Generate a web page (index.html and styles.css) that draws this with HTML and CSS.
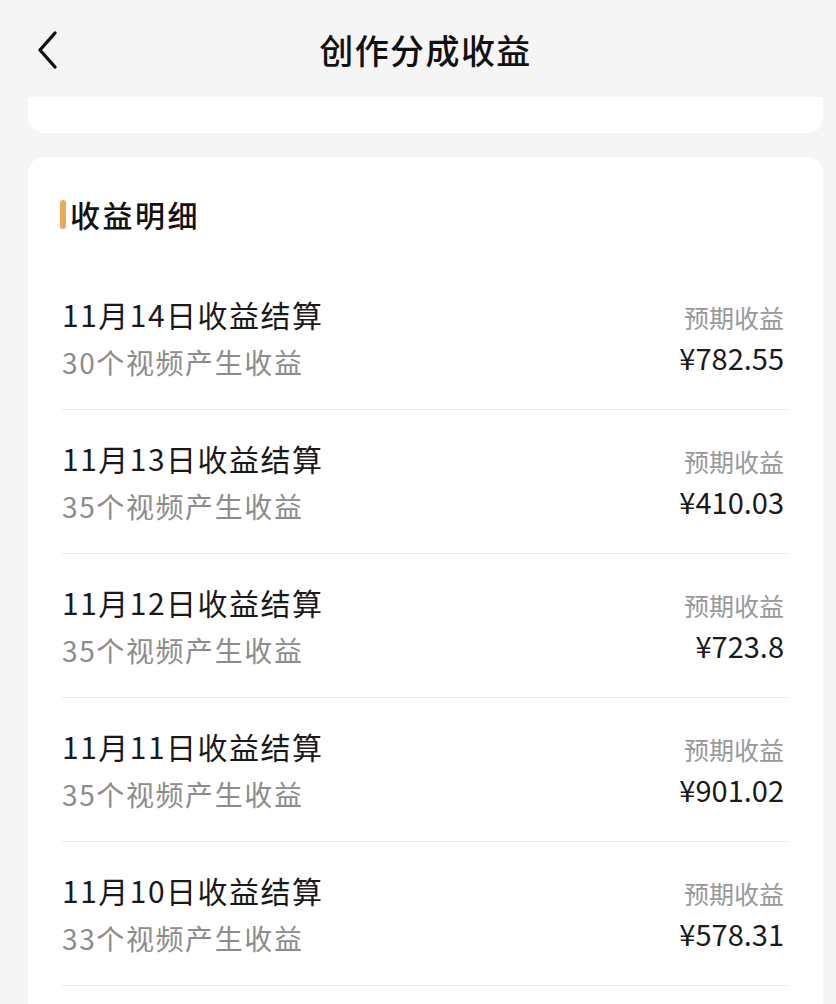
FILE: index.html
```html
<!DOCTYPE html>
<html lang="zh-CN">
<head>
<meta charset="utf-8">
<meta name="viewport" content="width=device-width, initial-scale=1.0">
<title>创作分成收益</title>
<link rel="stylesheet" href="styles.css">
</head>
<body>

<div class="page">
  <!-- Header -->
  <div class="header">
    <button class="back-btn" aria-label="返回">
      <svg width="22" height="40" viewBox="0 0 22 40"><path d="M19 3 L4 20 L19 37" fill="none" stroke="#111" stroke-width="3.4" stroke-linecap="round" stroke-linejoin="round"/></svg>
    </button>
    <div class="header-title">创作分成收益</div>
  </div>

  <!-- Summary card (scrolled) -->
  <div class="summary-card"></div>

  <!-- Detail list -->
  <div class="detail-card">
    <div class="section-title">收益明细</div>

    <div class="row">
      <div class="row-left">
        <div class="row-title">11月14日收益结算</div>
        <div class="row-sub">30个视频产生收益</div>
      </div>
      <div class="row-right">
        <div class="row-label">预期收益</div>
        <div class="row-amount">¥782.55</div>
      </div>
    </div>

    <div class="row">
      <div class="row-left">
        <div class="row-title">11月13日收益结算</div>
        <div class="row-sub">35个视频产生收益</div>
      </div>
      <div class="row-right">
        <div class="row-label">预期收益</div>
        <div class="row-amount">¥410.03</div>
      </div>
    </div>

    <div class="row">
      <div class="row-left">
        <div class="row-title">11月12日收益结算</div>
        <div class="row-sub">35个视频产生收益</div>
      </div>
      <div class="row-right">
        <div class="row-label">预期收益</div>
        <div class="row-amount">¥723.8</div>
      </div>
    </div>

    <div class="row">
      <div class="row-left">
        <div class="row-title">11月11日收益结算</div>
        <div class="row-sub">35个视频产生收益</div>
      </div>
      <div class="row-right">
        <div class="row-label">预期收益</div>
        <div class="row-amount">¥901.02</div>
      </div>
    </div>

    <div class="row">
      <div class="row-left">
        <div class="row-title">11月10日收益结算</div>
        <div class="row-sub">33个视频产生收益</div>
      </div>
      <div class="row-right">
        <div class="row-label">预期收益</div>
        <div class="row-amount">¥578.31</div>
      </div>
    </div>
  </div>
</div>

</body>
</html>
```

FILE: styles.css
```css
/* ======== Reset ======== */
* {
  box-sizing: border-box;
  margin: 0;
  padding: 0;
}

/* ======== Page ======== */
body {
  background: #f5f5f5;
  color: #1a1a1a;
  font-family: "Noto Sans CJK SC", "Noto Sans", sans-serif;
  overflow: hidden;
}

.page {
  padding: 0 13px 0 28px;
}

/* ======== Header ======== */
.header {
  position: relative;
  display: flex;
  justify-content: center;
  align-items: center;
  height: 97px;
}

.back-btn {
  position: absolute;
  left: 7px;
  top: 30px;
  width: 24px;
  height: 40px;
  background: transparent;
  border: none;
  display: flex;
  align-items: center;
  justify-content: center;
}

.header-title {
  font-size: 34px;
  font-weight: 500;
  letter-spacing: 1.4px;
  color: #111;
  margin-top: 2px;
}

/* ======== Cards ======== */
.summary-card {
  height: 36px;
  background: #fff;
  border-radius: 0 0 16px 16px;
}

.detail-card {
  margin-top: 24px;
  padding: 37px 34px 0 34px;
  background: #fff;
  border-radius: 16px 16px 0 0;
  min-height: 900px;
}

/* ======== Section title ======== */
.section-title {
  display: flex;
  align-items: center;
  height: 40px;
  font-size: 30px;
  font-weight: 500;
  letter-spacing: 2.5px;
  color: #111;
  margin-bottom: 32px;
}

.section-title::before {
  content: "";
  width: 6px;
  height: 29px;
  margin-left: -2px;
  margin-right: 4px;
  background: #eba95b;
  border-radius: 3px;
}

/* ======== Rows ======== */
.row {
  display: flex;
  justify-content: space-between;
  align-items: center;
  padding: 28px 0 27px;
  border-bottom: 1px solid #ededed;
}

.row-title {
  height: 40px;
  line-height: 40px;
  font-size: 30px;
  letter-spacing: 1.5px;
  color: #1a1a1a;
}

.row-sub {
  height: 40px;
  line-height: 40px;
  margin-top: 8px;
  font-size: 28px;
  letter-spacing: 1.6px;
  color: #8c8c8c;
}

.row-right {
  display: flex;
  flex-direction: column;
  align-items: flex-end;
  padding-right: 5px;
}

.row-label {
  line-height: 32px;
  font-size: 25px;
  color: #999;
}

.row-amount {
  line-height: 36px;
  margin-top: 6px;
  font-size: 29px;
  color: #1a1a1a;
}
```
